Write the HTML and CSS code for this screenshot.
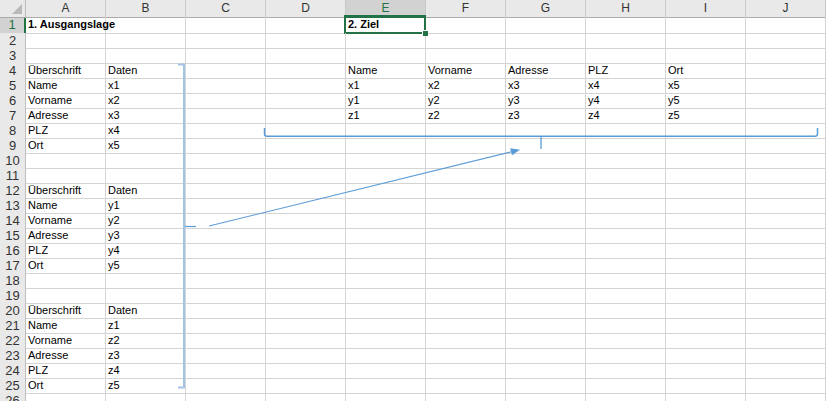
FILE: index.html
```html
<!DOCTYPE html>
<html lang="de">
<head>
<meta charset="utf-8">
<title>Tabelle</title>
<link rel="stylesheet" href="styles.css">
</head>
<body>
<div class="sheet">
  <div class="row head">
    <div class="corner"><span class="tri"></span></div>
    <div class="ch">A</div><div class="ch">B</div><div class="ch">C</div><div class="ch">D</div><div class="ch sel">E</div><div class="ch">F</div><div class="ch">G</div><div class="ch">H</div><div class="ch">I</div><div class="ch">J</div>
  </div>
  <div class="row first">
    <div class="rh sel">1</div>
    <div class="c b">1. Ausgangslage</div><div class="c"></div><div class="c"></div><div class="c"></div><div class="c b active">2. Ziel</div><div class="c"></div><div class="c"></div><div class="c"></div><div class="c"></div><div class="c"></div>
  </div>
  <div class="row"><div class="rh">2</div><div class="c"></div><div class="c"></div><div class="c"></div><div class="c"></div><div class="c"></div><div class="c"></div><div class="c"></div><div class="c"></div><div class="c"></div><div class="c"></div></div>
  <div class="row"><div class="rh">3</div><div class="c"></div><div class="c"></div><div class="c"></div><div class="c"></div><div class="c"></div><div class="c"></div><div class="c"></div><div class="c"></div><div class="c"></div><div class="c"></div></div>
  <div class="row"><div class="rh">4</div><div class="c">Überschrift</div><div class="c">Daten</div><div class="c"></div><div class="c"></div><div class="c">Name</div><div class="c">Vorname</div><div class="c">Adresse</div><div class="c">PLZ</div><div class="c">Ort</div><div class="c"></div></div>
  <div class="row"><div class="rh">5</div><div class="c">Name</div><div class="c">x1</div><div class="c"></div><div class="c"></div><div class="c">x1</div><div class="c">x2</div><div class="c">x3</div><div class="c">x4</div><div class="c">x5</div><div class="c"></div></div>
  <div class="row"><div class="rh">6</div><div class="c">Vorname</div><div class="c">x2</div><div class="c"></div><div class="c"></div><div class="c">y1</div><div class="c">y2</div><div class="c">y3</div><div class="c">y4</div><div class="c">y5</div><div class="c"></div></div>
  <div class="row"><div class="rh">7</div><div class="c">Adresse</div><div class="c">x3</div><div class="c"></div><div class="c"></div><div class="c">z1</div><div class="c">z2</div><div class="c">z3</div><div class="c">z4</div><div class="c">z5</div><div class="c"></div></div>
  <div class="row"><div class="rh">8</div><div class="c">PLZ</div><div class="c">x4</div><div class="c"></div><div class="c"></div><div class="c"></div><div class="c"></div><div class="c"></div><div class="c"></div><div class="c"></div><div class="c"></div></div>
  <div class="row"><div class="rh">9</div><div class="c">Ort</div><div class="c">x5</div><div class="c"></div><div class="c"></div><div class="c"></div><div class="c"></div><div class="c"></div><div class="c"></div><div class="c"></div><div class="c"></div></div>
  <div class="row"><div class="rh">10</div><div class="c"></div><div class="c"></div><div class="c"></div><div class="c"></div><div class="c"></div><div class="c"></div><div class="c"></div><div class="c"></div><div class="c"></div><div class="c"></div></div>
  <div class="row"><div class="rh">11</div><div class="c"></div><div class="c"></div><div class="c"></div><div class="c"></div><div class="c"></div><div class="c"></div><div class="c"></div><div class="c"></div><div class="c"></div><div class="c"></div></div>
  <div class="row"><div class="rh">12</div><div class="c">Überschrift</div><div class="c">Daten</div><div class="c"></div><div class="c"></div><div class="c"></div><div class="c"></div><div class="c"></div><div class="c"></div><div class="c"></div><div class="c"></div></div>
  <div class="row"><div class="rh">13</div><div class="c">Name</div><div class="c">y1</div><div class="c"></div><div class="c"></div><div class="c"></div><div class="c"></div><div class="c"></div><div class="c"></div><div class="c"></div><div class="c"></div></div>
  <div class="row"><div class="rh">14</div><div class="c">Vorname</div><div class="c">y2</div><div class="c"></div><div class="c"></div><div class="c"></div><div class="c"></div><div class="c"></div><div class="c"></div><div class="c"></div><div class="c"></div></div>
  <div class="row"><div class="rh">15</div><div class="c">Adresse</div><div class="c">y3</div><div class="c"></div><div class="c"></div><div class="c"></div><div class="c"></div><div class="c"></div><div class="c"></div><div class="c"></div><div class="c"></div></div>
  <div class="row"><div class="rh">16</div><div class="c">PLZ</div><div class="c">y4</div><div class="c"></div><div class="c"></div><div class="c"></div><div class="c"></div><div class="c"></div><div class="c"></div><div class="c"></div><div class="c"></div></div>
  <div class="row"><div class="rh">17</div><div class="c">Ort</div><div class="c">y5</div><div class="c"></div><div class="c"></div><div class="c"></div><div class="c"></div><div class="c"></div><div class="c"></div><div class="c"></div><div class="c"></div></div>
  <div class="row"><div class="rh">18</div><div class="c"></div><div class="c"></div><div class="c"></div><div class="c"></div><div class="c"></div><div class="c"></div><div class="c"></div><div class="c"></div><div class="c"></div><div class="c"></div></div>
  <div class="row"><div class="rh">19</div><div class="c"></div><div class="c"></div><div class="c"></div><div class="c"></div><div class="c"></div><div class="c"></div><div class="c"></div><div class="c"></div><div class="c"></div><div class="c"></div></div>
  <div class="row"><div class="rh">20</div><div class="c">Überschrift</div><div class="c">Daten</div><div class="c"></div><div class="c"></div><div class="c"></div><div class="c"></div><div class="c"></div><div class="c"></div><div class="c"></div><div class="c"></div></div>
  <div class="row"><div class="rh">21</div><div class="c">Name</div><div class="c">z1</div><div class="c"></div><div class="c"></div><div class="c"></div><div class="c"></div><div class="c"></div><div class="c"></div><div class="c"></div><div class="c"></div></div>
  <div class="row"><div class="rh">22</div><div class="c">Vorname</div><div class="c">z2</div><div class="c"></div><div class="c"></div><div class="c"></div><div class="c"></div><div class="c"></div><div class="c"></div><div class="c"></div><div class="c"></div></div>
  <div class="row"><div class="rh">23</div><div class="c">Adresse</div><div class="c">z3</div><div class="c"></div><div class="c"></div><div class="c"></div><div class="c"></div><div class="c"></div><div class="c"></div><div class="c"></div><div class="c"></div></div>
  <div class="row"><div class="rh">24</div><div class="c">PLZ</div><div class="c">z4</div><div class="c"></div><div class="c"></div><div class="c"></div><div class="c"></div><div class="c"></div><div class="c"></div><div class="c"></div><div class="c"></div></div>
  <div class="row"><div class="rh">25</div><div class="c">Ort</div><div class="c">z5</div><div class="c"></div><div class="c"></div><div class="c"></div><div class="c"></div><div class="c"></div><div class="c"></div><div class="c"></div><div class="c"></div></div>
  <div class="row"><div class="rh">26</div><div class="c"></div><div class="c"></div><div class="c"></div><div class="c"></div><div class="c"></div><div class="c"></div><div class="c"></div><div class="c"></div><div class="c"></div><div class="c"></div></div>

  <svg class="shapes" width="826" height="401" viewBox="0 0 826 401" aria-hidden="true">
    <path d="M178 64.5 H184 V387.5 H178" fill="none" stroke="#a3c4e6" stroke-width="2"/>
    <path d="M185 226.5 H196" fill="none" stroke="#5b9bd5" stroke-width="1.2"/>
    <path d="M264.5 128 V134 Q264.5 136.3 267 136.3 H815 Q817.5 136.3 817.5 134 V128" fill="none" stroke="#5b9bd5" stroke-width="1.5"/>
    <path d="M541 136.3 V149" fill="none" stroke="#5b9bd5" stroke-width="1.3"/>
    <path d="M209 226 L511.5 151.8" fill="none" stroke="#5b9bd5" stroke-width="1.1"/>
    <polygon points="520,149.8 510.2,148.2 512,155.3" fill="#5b9bd5"/>
  </svg>
</div>
</body>
</html>
```
FILE: styles.css
```css
html, body {
  margin: 0;
  padding: 0;
  background: #ffffff;
}

body {
  font-family: "Liberation Sans", Arial, sans-serif;
  font-size: 11px;
  color: #000;
  overflow: hidden;
}

.sheet {
  position: relative;
  width: 826px;
  height: 401px;
  overflow: hidden;
}

.row {
  display: grid;
  grid-template-columns: 26px repeat(10, 80px);
  height: 15px;
}

.row.head {
  height: 17px;
}

.row.first {
  height: 16px;
}

.c {
  box-sizing: border-box;
  border-right: 1px solid #d4d4d4;
  border-bottom: 1px solid #d4d4d4;
  padding-left: 2px;
  line-height: 15px;
  white-space: nowrap;
  overflow: visible;
  position: relative;
}

.c.b {
  font-weight: bold;
}

.rh {
  box-sizing: border-box;
  background: #e9e9e9;
  border-right: 1px solid #bdbdbd;
  border-bottom: 1px solid #d0d0d0;
  color: #333;
  font-size: 13px;
  line-height: 15px;
  text-align: center;
}

.rh.sel {
  background: #d2d2d2;
  color: #217346;
  border-right: 2px solid #217346;
  line-height: 16px;
}

.corner {
  box-sizing: border-box;
  background: #e9e9e9;
  border-right: 1px solid #bdbdbd;
  border-bottom: 1px solid #ababab;
  position: relative;
}

.tri {
  position: absolute;
  right: 3px;
  bottom: 3px;
  width: 0;
  height: 0;
  border-left: 10px solid transparent;
  border-bottom: 10px solid #b9b9b9;
}

.ch {
  box-sizing: border-box;
  background: #e9e9e9;
  border-right: 1px solid #c8c8c8;
  border-bottom: 1px solid #ababab;
  color: #333;
  font-size: 12px;
  line-height: 16px;
  text-align: center;
}

.ch.sel {
  background: #d2d2d2;
  color: #217346;
  border-bottom: 2px solid #217346;
}

.c.active::after {
  content: "";
  position: absolute;
  left: -2px;
  top: -2px;
  right: -1px;
  bottom: -1px;
  border: 2px solid #217346;
}

.c.active::before {
  content: "";
  position: absolute;
  right: -3px;
  bottom: -3px;
  width: 5px;
  height: 5px;
  background: #217346;
  border: 1px solid #fff;
  border-right: 0;
  border-bottom: 0;
  z-index: 2;
}

.shapes {
  position: absolute;
  left: 0;
  top: 0;
  pointer-events: none;
}
```
